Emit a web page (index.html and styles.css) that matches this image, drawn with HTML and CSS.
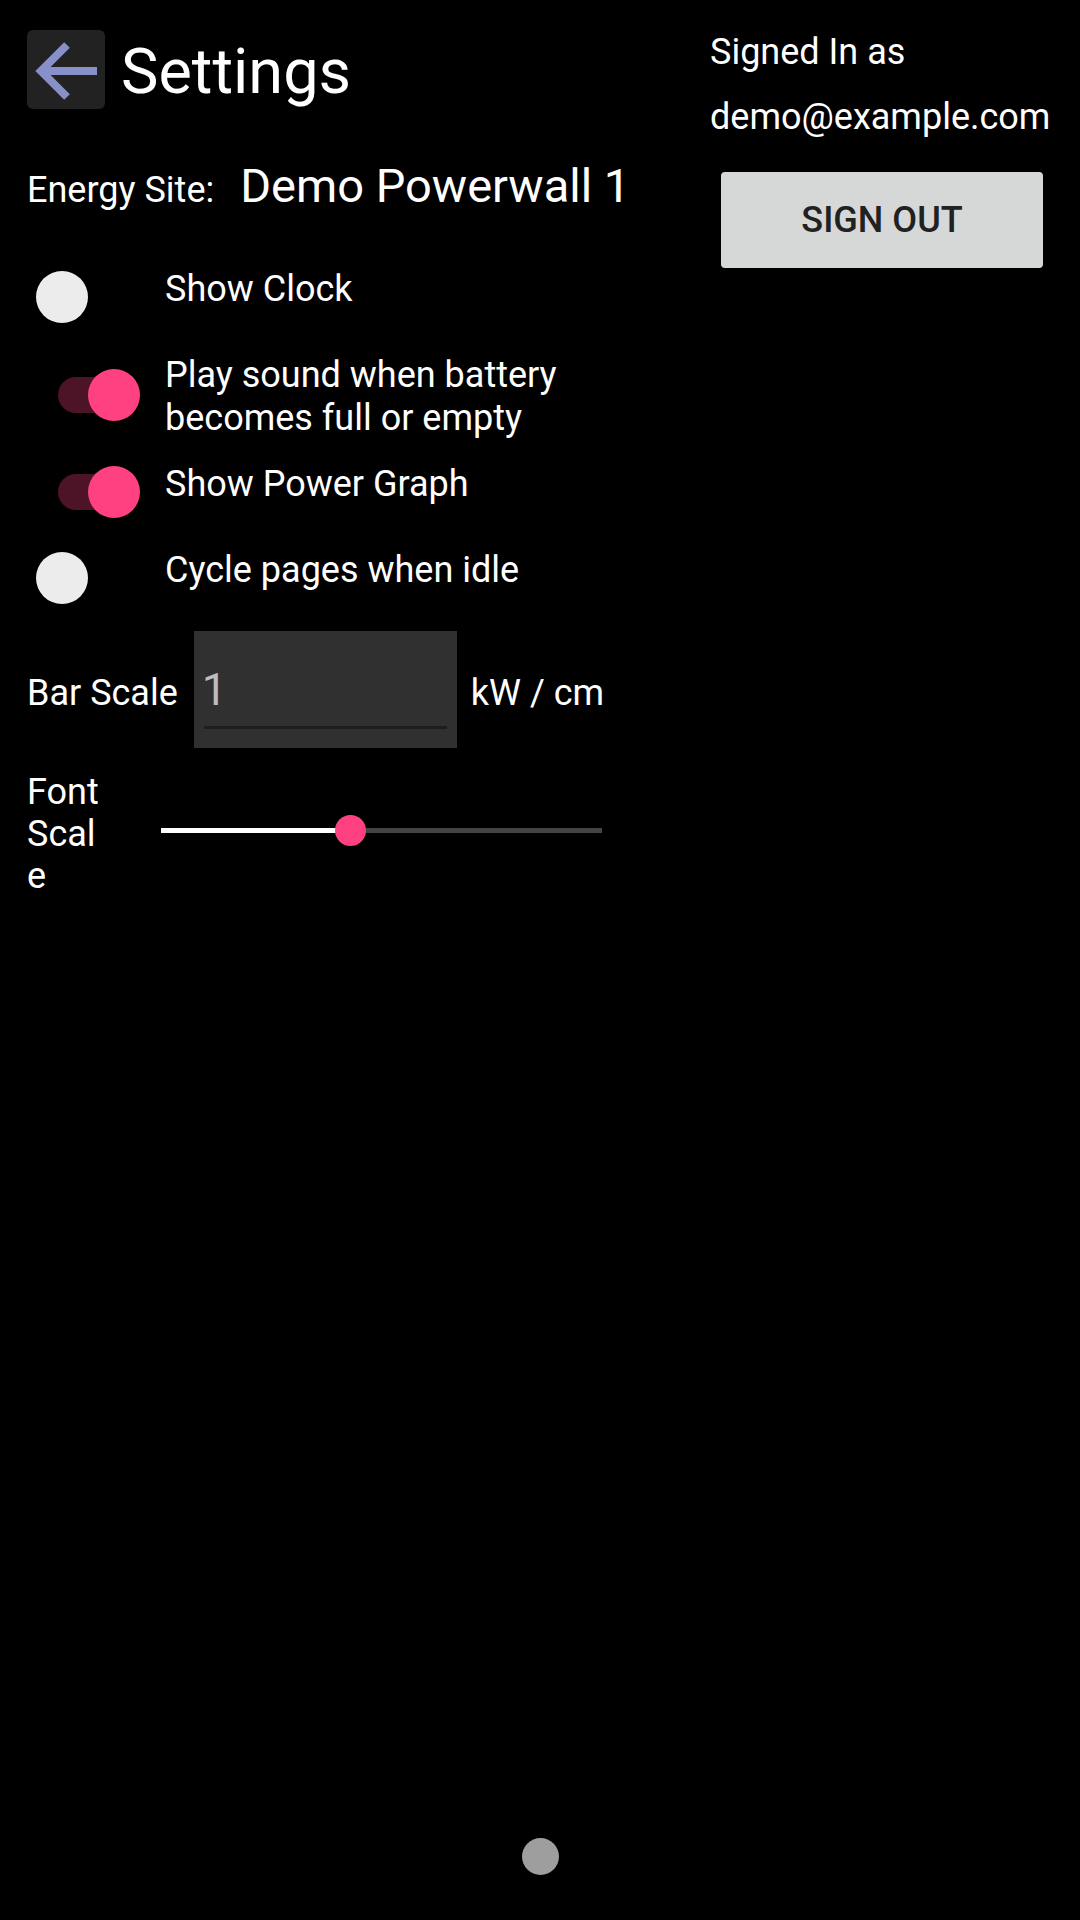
FILE: index.html
```html
<!DOCTYPE html>
<html lang="en">
<head>
<meta charset="utf-8">
<title>Settings</title>
<link rel="stylesheet" href="styles.css">
</head>
<body>
<div class="screen">
  <div class="content">
    <section class="left">
      <header class="title-row">
        <button class="back" aria-label="Back">
          <svg viewBox="0 0 78 79" width="78" height="79"><path d="M40 15 L14 41 L40 67 M14 41 H70"/></svg>
        </button>
        <h1 class="title">Settings</h1>
      </header>
      <div class="site-row">
        <span class="site-label">Energy Site:</span>
        <span class="site-name">Demo Powerwall 1</span>
      </div>
      <div class="toggles">
        <div class="toggle-row">
          <span class="switch"><span class="thumb"></span></span>
          <span class="toggle-label">Show Clock</span>
        </div>
        <div class="toggle-row">
          <span class="switch on"><span class="thumb"></span></span>
          <span class="toggle-label">Play sound when battery becomes full or empty</span>
        </div>
        <div class="toggle-row">
          <span class="switch on"><span class="thumb"></span></span>
          <span class="toggle-label">Show Power Graph</span>
        </div>
        <div class="toggle-row">
          <span class="switch"><span class="thumb"></span></span>
          <span class="toggle-label">Cycle pages when idle</span>
        </div>
      </div>
      <div class="bar-row">
        <span class="label">Bar Scale</span>
        <div class="input"><span class="input-value">1</span><span class="input-line"></span></div>
        <span class="label">kW / cm</span>
      </div>
      <div class="font-row">
        <span class="font-label">Font Scale</span>
        <div class="slider">
          <div class="slider-fill" style="width:43%"></div>
          <span class="slider-thumb" style="left:43%"></span>
        </div>
      </div>
    </section>
    <aside class="right">
      <div class="account-line">Signed In as</div>
      <div class="account-line">demo@example.com</div>
      <button class="signout">SIGN OUT</button>
    </aside>
  </div>
  <div class="pager"><span class="dot"></span></div>
</div>
</body>
</html>
```
FILE: styles.css
```css
* { box-sizing: border-box; }
html, body { margin: 0; padding: 0; background: #000; }
body {
  font-family: Roboto, "Noto Sans", sans-serif;
  color: #fff;
  font-size: 36px;
}
.screen {
  width: 1080px;
  height: 1920px;
  display: flex;
  flex-direction: column;
}
.content {
  flex: 1;
  display: grid;
  grid-template-columns: 1fr 370px;
  align-items: start;
}
.left { padding: 30px 60px 0 27px; }

.title-row {
  display: flex;
  align-items: flex-start;
  gap: 16px;
  height: 79px;
}
.back {
  width: 78px;
  height: 79px;
  border: 0;
  padding: 0;
  background: #222222;
  border-radius: 6px;
  display: block;
}
.back svg { display: block; }
.back path {
  fill: none;
  stroke: #8790c8;
  stroke-width: 8;
  stroke-linejoin: miter;
}
.title {
  margin: 0;
  font-size: 63px;
  font-weight: 400;
  line-height: 74px;
  padding-top: 5px;
}

.site-row {
  margin-top: 49px;
  display: flex;
  align-items: baseline;
  gap: 26px;
  line-height: 56px;
  white-space: nowrap;
}
.site-label, .site-name { flex-shrink: 0; }
.site-name { font-size: 47px; }

.toggles {
  margin-top: 50px;
  display: flex;
  flex-direction: column;
  gap: 23.5px;
}
.toggle-row {
  display: grid;
  grid-template-columns: 138px 1fr;
  min-height: 62px;
}
.switch {
  align-self: center;
  margin: 0 0 4px 9px;
  width: 104px;
  height: 52px;
  position: relative;
  display: flex;
  align-items: center;
}
.switch.on { justify-content: flex-end; }
.switch.on::before {
  content: "";
  position: absolute;
  left: 22px;
  top: 8px;
  width: 60px;
  height: 36px;
  border-radius: 18px;
  background: #4d1327;
}
.thumb {
  width: 52px;
  height: 52px;
  border-radius: 50%;
  background: #ececec;
  position: relative;
  z-index: 1;
}
.switch.on .thumb { background: #ff4081; }
.toggle-label {
  align-self: start;
  line-height: 43px;
  max-width: 457px;
}

.bar-row {
  margin-top: 20px;
  display: flex;
  align-items: baseline;
}
.label { line-height: 43px; white-space: nowrap; }
.input {
  width: 263px;
  height: 117px;
  margin: 0 14px 0 16px;
  background: #303030;
  padding: 31px 10px 0 10px;
  display: flex;
  flex-direction: column;
}
.input-value {
  font-size: 45px;
  line-height: 56px;
  color: #bdbdbd;
  margin-left: -2px;
}
.input-line {
  height: 3px;
  margin-top: 8px;
  background: #1e1e1e;
}

.font-row {
  margin-top: 23px;
  display: flex;
  align-items: center;
}
.font-label {
  width: 76px;
  line-height: 42px;
  overflow-wrap: anywhere;
}
.slider {
  margin: 0 0 7px 58px;
  width: 441px;
  height: 31px;
  position: relative;
}
.slider::before {
  content: "";
  position: absolute;
  left: 0;
  right: 0;
  top: 13px;
  height: 5px;
  background: #444444;
}
.slider-fill {
  position: absolute;
  left: 0;
  top: 13px;
  height: 5px;
  background: #ffffff;
}
.slider-thumb {
  position: absolute;
  top: 0;
  width: 31px;
  height: 31px;
  margin-left: -15.5px;
  border-radius: 50%;
  background: #ff4081;
}

.right { padding-top: 20px; }
.account-line { line-height: 65px; white-space: nowrap; }
.signout {
  display: block;
  margin: 22px 0 0 11px;
  width: 322px;
  height: 96px;
  border: 0;
  border-radius: 4px;
  background: #d6d7d7;
  color: #212121;
  font-family: Roboto, "Noto Sans", sans-serif;
  font-weight: 500;
  font-size: 36px;
  line-height: 43px;
  padding: 0;
}

.pager {
  display: flex;
  justify-content: center;
  padding-bottom: 45px;
}
.dot {
  width: 37px;
  height: 37px;
  border-radius: 50%;
  background: #9e9e9e;
}
```
